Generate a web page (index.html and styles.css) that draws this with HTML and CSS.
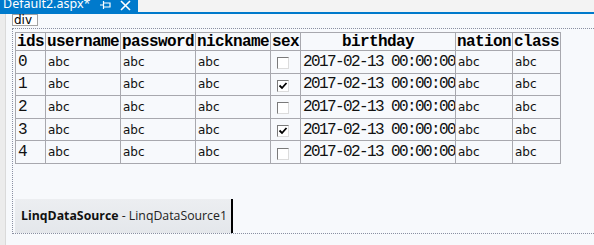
FILE: index.html
```html
<!DOCTYPE html>
<html lang="en">
<head>
  <meta charset="UTF-8" />
  <title>Default2.aspx</title>
  <link rel="stylesheet" href="styles.css">
</head>
<body>
  <div class="tabbar">
    <div class="tab">
      <span class="tab-title">Default2.aspx*</span>
      <svg class="pin" width="11" height="10" viewBox="0 0 11 10">
        <path d="M0 5h3M3.5 1v8M4 3h6v4H4" fill="none" stroke="#fff" stroke-width="1.2"/>
      </svg>
      <svg class="close" width="11" height="11" viewBox="0 0 11 11">
        <path d="M1 1l9 9M10 1l-9 9" stroke="#fff" stroke-width="1.6"/>
      </svg>
    </div>
  </div>

  <div class="surface">
    <div class="gutter"></div>
    <div class="canvas">
      <div class="tag">div</div>
      <div class="outline">
        <table class="grid">
          <colgroup>
            <col style="width:30px"><col style="width:75px"><col style="width:75px"><col style="width:75px">
            <col style="width:30px"><col style="width:155px"><col style="width:57px"><col style="width:48px">
          </colgroup>
          <thead>
            <tr>
              <th>ids</th><th>username</th><th>password</th><th>nickname</th>
              <th>sex</th><th>birthday</th><th>nation</th><th>class</th>
            </tr>
          </thead>
          <tbody id="rows"></tbody>
        </table>
        <div class="ds"><b>LinqDataSource</b> - LinqDataSource1</div>
      </div>
    </div>
  </div>

  <script>
    const rows = document.getElementById("rows");
    const checked = [false, true, false, true, false];
    const tick = '<svg width="10" height="10" viewBox="0 0 10 10"><path d="M1.5 4.5l2.5 2.5 4.5-5" fill="none" stroke="#000" stroke-width="1.8"/></svg>';

    checked.forEach((on, i) => {
      const tr = document.createElement("tr");
      tr.innerHTML = `
        <td class="num">${i}</td>
        <td>abc</td><td>abc</td><td>abc</td>
        <td><span class="check">${on ? tick : ""}</span></td>
        <td class="num">2017-02-13 00:00:00</td>
        <td>abc</td><td>abc</td>
      `;
      rows.appendChild(tr);
    });
  </script>
</body>
</html>
```

FILE: styles.css
```css
body {
  margin: 0;
  height: 245px;
  overflow: hidden;
  background: #f7f9fc;
  font-family: "DejaVu Sans", sans-serif;
}

.tabbar {
  height: 12px;
  background: #f3f3f3;
  border-bottom: 2px solid #007acc;
}

.tab {
  display: flex;
  align-items: flex-start;
  width: 138px;
  height: 12px;
  background: #007acc;
  overflow: hidden;
}

.tab-title {
  color: #fff;
  font-family: "Noto Sans", sans-serif;
  font-size: 12.5px;
  line-height: 12px;
  margin: -2px 0 0 3px;
  width: 97px;
}

.close {
  margin-left: 9px;
}

.surface {
  display: flex;
  height: 231px;
}

.gutter {
  width: 5px;
  background: #ececec;
  border-right: 1px solid #dadada;
}

.canvas {
  flex: 1;
  padding-left: 6px;
}

.tag {
  width: 23px;
  height: 10px;
  border: 1px solid #a4a4a4;
  background: #fff;
  font-size: 12px;
  line-height: 10px;
  padding-left: 1px;
}

.outline {
  margin-top: 2px;
  border: 1px dotted #8a90a2;
  border-right: none;
  padding: 3px 0 0 2px;
}

.grid {
  border-collapse: collapse;
  table-layout: fixed;
  width: 545px;
  border: 1px solid #a8a8ae;
}

.grid th,
.grid td {
  border: 1px solid #a8a8ae;
  padding: 0 0 0 2px;
  white-space: nowrap;
  overflow: hidden;
}

.grid th {
  height: 17px;
  padding: 0;
  text-align: center;
  font-family: "Liberation Mono", "Courier New", monospace;
  font-size: 16px;
  font-weight: bold;
  letter-spacing: -0.6px;
  line-height: 16px;
}

.grid td {
  height: 21.6px;
  font-size: 12px;
  color: #111;
}

.grid td.num {
  font-family: "Liberation Mono", "Courier New", monospace;
  font-size: 16px;
  letter-spacing: -1.6px;
}

.check {
  display: inline-block;
  width: 10px;
  height: 10px;
  margin: 3px 0 0 4px;
  border-top: 1px solid #7a7a7a;
  border-left: 1px solid #7a7a7a;
  border-right: 1px solid #dcdcdc;
  border-bottom: 1px solid #dcdcdc;
  background: #fff;
  vertical-align: top;
}

.check svg {
  display: block;
}

.ds {
  width: 210px;
  height: 34px;
  margin-top: 35px;
  padding-left: 6px;
  background: linear-gradient(#eceef1, #e4e7eb);
  border-right: 2px solid #000;
  font-family: "Open Sans", sans-serif;
  font-size: 12.3px;
  line-height: 34px;
  color: #222;
}

.ds b {
  color: #111;
}
```
